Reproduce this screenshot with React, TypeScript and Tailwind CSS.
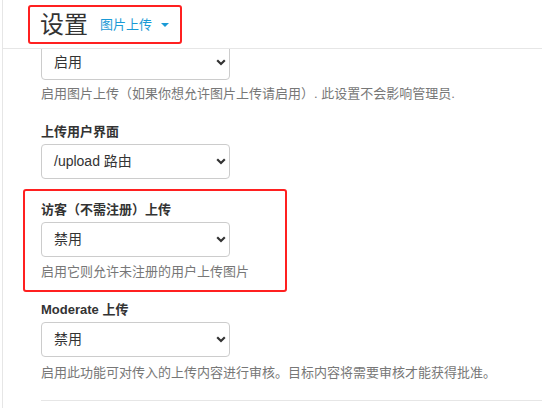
import React from "react";

const FONT = { fontFamily: '"Liberation Sans", "Noto Sans CJK SC", sans-serif' };

function Chevron() {
  return (
    <svg width="10" height="7" viewBox="0 0 10 7" className="text-[#333]">
      <path d="M1.2 1.3 L5 5 L8.8 1.3" fill="none" stroke="currentColor" strokeWidth="2.2" />
    </svg>
  );
}

function FakeSelect({ value, className = "" }: { value: string; className?: string }) {
  return (
    <div
      className={`flex h-[35px] w-[189px] items-center justify-between rounded-[4px] border border-[#cccccc] bg-white pl-[12px] pr-[3px] text-[14px] text-[#333] ${className}`}
    >
      <span>{value}</span>
      <Chevron />
    </div>
  );
}

function Label({ children, className = "" }: { children: React.ReactNode; className?: string }) {
  return <div className={`text-[13px] leading-[18px] font-bold text-[#333] ${className}`}>{children}</div>;
}

function Help({ children, className = "" }: { children: React.ReactNode; className?: string }) {
  return <div className={`text-[13px] leading-[18px] text-[#777] ${className}`}>{children}</div>;
}

export default function App() {
  return (
    <div className="h-[408px] w-[542px] overflow-hidden bg-white pl-[2px]" style={FONT}>
      <div className="h-full border-l border-[#e6e6e6]">
        <div className="flex h-[49px] items-start border-b border-[#e6e6e6] pl-[25px] pt-[5px]">
          <div className="flex h-[39px] items-center rounded-[3px] border-2 border-[#ff2020] pl-[10px] pr-[11px]">
            <span className="text-[24px] leading-none text-[#333]">设置</span>
            <span className="ml-[12px] text-[13px] text-[#1a9ad6]">图片上传</span>
            <span className="ml-[9px] mt-[1px] h-0 w-0 border-x-[4px] border-t-[4px] border-x-transparent border-t-[#1a9ad6]" />
          </div>
        </div>

        <div className="h-[359px] overflow-hidden">
          <div className="pl-[38px]">
            <FakeSelect value="启用" className="-mt-[4px]" />
            <Help className="mt-[5px]">启用图片上传（如果你想允许图片上传请启用）. 此设置不会影响管理员.</Help>

            <Label className="mt-[20px]">上传用户界面</Label>
            <FakeSelect value="/upload 路由" className="mt-[3px]" />
          </div>

          <div className="ml-[20px] mt-[10px] w-[264px] rounded-[3px] border-2 border-[#ff2020] pb-[9px] pl-[16px] pt-[10px]">
            <Label>访客（不需注册）上传</Label>
            <FakeSelect value="禁用" className="mt-[3px]" />
            <Help className="mt-[6px]">启用它则允许未注册的用户上传图片</Help>
          </div>

          <div className="pl-[38px]">
            <Label className="mt-[9px]">Moderate 上传</Label>
            <FakeSelect value="禁用" className="mt-[3px]" />
            <Help className="mt-[7px]">启用此功能可对传入的上传内容进行审核。目标内容将需要审核才能获得批准。</Help>
            <div className="mt-[18px] border-t border-[#e6e6e6]" />
          </div>
        </div>
      </div>
    </div>
  );
}
